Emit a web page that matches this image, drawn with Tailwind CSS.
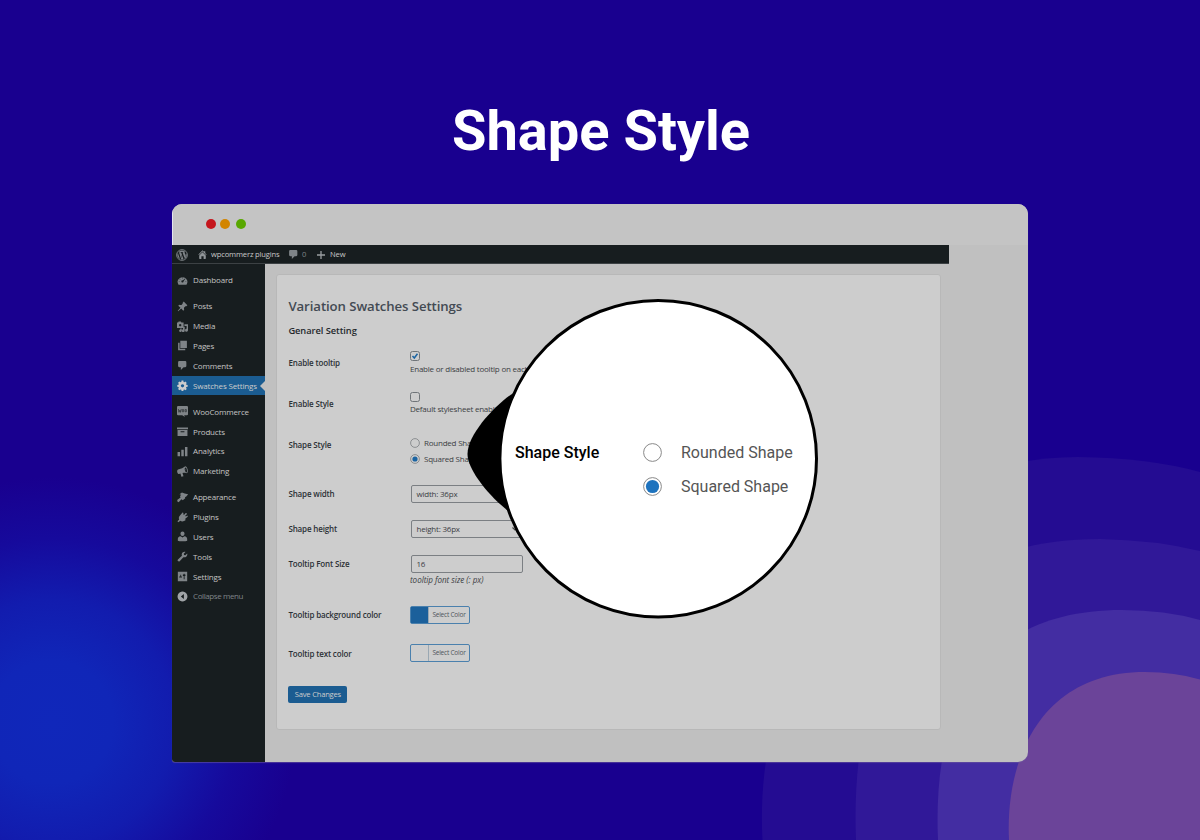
<!DOCTYPE html>
<html lang="en">
<head>
<meta charset="utf-8">
<title>Shape Style</title>
<script src="https://cdn.jsdelivr.net/npm/@tailwindcss/browser@4"></script>
</head>
<body class="relative w-[1200px] h-[840px] overflow-hidden bg-[#19008f] font-['Open_Sans','Noto_Sans',sans-serif]">
<!-- backdrop -->
<svg class="absolute inset-0" width="1200" height="840" viewBox="0 0 1200 840">
  <defs><radialGradient id="glow" gradientUnits="userSpaceOnUse" cx="52" cy="722" r="245">
    <stop offset="0" stop-color="#1027ba"/><stop offset=".25" stop-color="#1026b8"/><stop offset=".5" stop-color="#121cae"/><stop offset=".75" stop-color="#160a9c"/><stop offset="1" stop-color="#19008f"/>
  </radialGradient></defs>
  <rect width="420" height="440" y="400" fill="url(#glow)"/>
  <path fill="#240c92" d="M762.500 840C752 660 870 457 1078 457Q1150 458 1200 472V840Z"/>
  <path fill="#301898" d="M856 840C850 690 900 539 1100 539Q1155 540 1200 551V840Z"/>
  <path fill="#432da2" d="M938 840C932 700 985 610 1122 610Q1165 610 1200 620V840Z"/>
  <path fill="#6b4499" d="M1009 840C1005 760 1040 672 1145 672Q1175 672 1200 679.500V840Z"/>
</svg>

<svg class="hidden">
  <symbol id="wp" viewBox="0 0 20 20"><circle cx="10" cy="10" r="9" fill="none" stroke="currentColor" stroke-width="1.500"/><path fill="currentColor" d="M3.100 6.800 6.800 17A7.600 7.600 0 0 1 3.100 6.800ZM4 5.500A7.600 7.600 0 0 1 15.200 4.400C14 5 14.200 6.300 14.900 7.400c.9 1.500 1 2.500.3 4.600l-1 3L10.900 5.900l1-.1v-.7H7.500v.7l1.100.1 1.300 3.500-1.800 5.400L5 5.900l1-.1v-.7ZM10.200 10.700l2.300 6.400a7.600 7.600 0 0 1-4.500.1ZM16.700 6.500a7.600 7.600 0 0 1-2.800 10.100l2.300-6.700c.5-1.300.7-2.300.5-3.400Z"/></symbol>
  <symbol id="home" viewBox="0 0 20 20"><path fill="currentColor" d="m16 8.500 1.500 1.600-1.100 1L10 4.600l-6.400 6.500-1.100-1L10 2.400l2.500 2.600V4H15v3.500ZM10 6.100l6 5.900v5a1 1 0 0 1-1 1h-3v-5H8v5H5a1 1 0 0 1-1-1v-5Z"/></symbol>
  <symbol id="comment" viewBox="0 0 20 20"><path fill="currentColor" d="M4 2h11a2 2 0 0 1 2 2v7a2 2 0 0 1-2 2h-3l-5 5v-5H4a2 2 0 0 1-2-2V4a2 2 0 0 1 2-2Z"/></symbol>
  <symbol id="plus" viewBox="0 0 20 20"><path fill="currentColor" d="M18 8.700v2.600h-6.700V18H8.700v-6.700H2V8.700h6.700V2h2.600v6.700Z"/></symbol>
  <symbol id="dash" viewBox="0 0 20 20"><path fill="currentColor" fill-rule="evenodd" d="M2.760 17.500h14.480A9 8.500 0 1 0 1 11.500c0 2 .64 4.500 1.760 6ZM10 4.700a.8.800 0 1 0 0 1.600.8.800 0 0 0 0-1.600ZM5.500 6.700a.8.800 0 1 0 0 1.600.8.800 0 0 0 0-1.600Zm9-.2-4 3.300a2 2 0 1 0 1.400 1.600l3-4.200ZM3.800 10.700a.8.800 0 1 0 0 1.600.8.800 0 0 0 0-1.600Zm12.400 0a.8.800 0 1 0 0 1.600.8.800 0 0 0 0-1.600Z"/></symbol>
  <symbol id="pin" viewBox="0 0 20 20"><path fill="currentColor" d="m10.400 3 1.900-1.900c1.800 2.300 3.900 4.500 6.600 6.600L17 9.600c-1.300-.4-2-.1-4.100 2.200-.6 1.400-.1 2.800.2 4.100l-1.700 1.700-3.700-4-5.600 4.900-.7-.7L6.300 12.300l-4-3.700L4 6.900c1.500.4 2.700.8 4.100.2C10.200 5.200 10.600 4.500 10.400 3Z"/></symbol>
  <symbol id="media" viewBox="0 0 20 20"><path fill="currentColor" fill-rule="evenodd" d="M0 2.500h2L3 1h4l1 1.500h4V12.500H0ZM5.800 5.300a2.100 2.100 0 1 0 .01 0Z"/><path fill="currentColor" d="M13.500 6H20v11a2.700 2.700 0 1 1-2.500-2.700V9h-4ZM11 10.500h3v7a2.700 2.700 0 1 1-3-2.600ZM6 13.500h2.500v4A2.300 2.300 0 1 1 6 15.300Z"/></symbol>
  <symbol id="pages" viewBox="0 0 20 20"><path fill="currentColor" d="M6 1.500h12v13H6ZM2 5h2.800v10.700H15V18.500H2Z"/></symbol>
  <symbol id="gear" viewBox="0 0 20 20"><path fill="currentColor" fill-rule="evenodd" d="m8.300 1-.5 2.600-1.400.6-2-1.300L2 5.200l1.300 2-.6 1.600-2.200.5v3l2.200.5.6 1.400-1.300 2 2.400 2.300 2-1.300 1.400.6.5 2.100h3.200l.5-2.100 1.400-.6 2 1.300 2.300-2.300-1.300-2 .6-1.400 2.400-.5v-3L17 8.700l-.6-1.400 1.300-2-2.300-2.400-2 1.300-1.400-.6-.5-2.600ZM10 7.500a3 3 0 1 1-.01 0Z"/></symbol>
  <symbol id="woo" viewBox="0 0 20 20"><path fill="currentColor" d="M2 0h16a2 2 0 0 1 2 2v13a2 2 0 0 1-2 2h-5l1.500 3L9.500 17H2a2 2 0 0 1-2-2V2a2 2 0 0 1 2-2Z"/><path d="m2.500 5.500 1 6 1.800-4 1 4 1.500-6M9.700 6.500h2.300v4H9.700ZM14.700 6.500h2.300v4h-2.300Z" fill="none" stroke="#2a3033" stroke-width="1.300"/></symbol>
  <symbol id="box" viewBox="0 0 20 20"><path fill="currentColor" fill-rule="evenodd" d="M0 2.500h20V6H0ZM1 7.200h18V18H1ZM6.500 9.500v2h7v-2Z"/></symbol>
  <symbol id="bars" viewBox="0 0 20 20"><path fill="currentColor" d="M1 11h4.500v7.500H1ZM7.800 7h4.500v11.500H7.800ZM14.500 2H19v16.500h-4.500Z"/></symbol>
  <symbol id="horn" viewBox="0 0 20 20"><path fill="currentColor" fill-rule="evenodd" d="M19.200 5.900c.9 3.300.3 6.500-1.400 7-1 .3-2.600-.4-5.800-.6l-2 .5 1.800 5.800-3.800.9L6.200 13.700l-2.400.8C1.900 14.500 1 12.800.5 11.200S.100 7.500 1.800 6.500l7.600-2.300C11.400 3 13.400 1 14.600.7c1.600-.4 3.700 1.900 4.600 5.200Zm-4-3c-1.200.4-1.500 2.500-.9 5s2 4 3 3.700 1.400-2.500.7-4.900c-.6-2.300-1.800-4-2.800-3.800Zm.5 2.600c.8 0 1.300 2.500.3 2.900Z"/></symbol>
  <symbol id="brush" viewBox="0 0 20 20"><path fill="currentColor" d="M4.500 4 9 1l5 1.500 6.500 1.700-4.500 5-1.500-.7.5 3-4.500 3.500-2.500-1.800L3 18.500.3 17l.5-3 5.700-4-1-2.500L7.500 5Z"/></symbol>
  <symbol id="plug" viewBox="0 0 20 20"><path fill="currentColor" d="M13.100 4.900 15.900 2c.7-.6 2.600 1 1.900 1.900l-2.900 2.900 1.100 1.200 2.300-1.400c.9-.4 1.900 1.500 1 2.200L15 12.200l.5 2.800c-3 2.500-7 2.700-9.500 1L2.500 18.700.8 17 4 13.500c-1.500-2.500-.3-5.300 1.800-7.500L9.700 1.200c.6-.8 2.700.3 2 1.300l-.7 1.700Z"/></symbol>
  <symbol id="user" viewBox="0 0 20 20"><path fill="currentColor" d="M10 9.200C7 9.200 6.300 6.500 6.300 4.700a3.700 3.700 0 0 1 7.400 0c0 1.800-.7 4.500-3.700 4.500ZM6.500 9.500 10 12l3.500-2.500c3.500.5 5 2.500 5 5V17.500c-2 1.500-15 1.500-17 0v-3c0-2.500 1.500-4.500 5-5Z"/></symbol>
  <symbol id="wrench" viewBox="0 0 20 20"><path fill="currentColor" d="M17.200 9.800c-1.600 1.700-3.800 2.100-5.600 1.500l-6.800 7.200c-1 .9-2.700 0-3.200-.5s-.9-1.700.1-2.700L9 8.600c-.8-1.900-.4-4.300 1.100-5.800 1.400-1.400 3.500-1.800 5.300-1.200l-3 3.500.5 2.200 2.200.5 3.400-3.300c.7 1.800.2 3.900-1.300 5.300Z"/></symbol>
  <symbol id="sett" viewBox="0 0 20 20"><path fill="currentColor" d="M1.500 1.500h17v17h-17Z"/><path fill="#171d1f" d="M12.200 5h1.600v10h-1.600ZM10.700 6.500h4.600V9h-4.600ZM4 12h5v-2H7.500V7H6v3H4Z"/></symbol>
  <symbol id="coll" viewBox="0 0 20 20"><path fill="currentColor" fill-rule="evenodd" d="M10 1a9 9 0 1 1-.01 0ZM12.500 5.500 7 10l5.500 4.500Z"/></symbol>
</svg>

<div class="relative flex flex-col h-full">
  <h1 class="pt-[98px] h-[204px] text-center font-['Roboto',sans-serif] font-bold text-[56px] leading-[66px] text-white pl-[2px]">Shape Style</h1>

  <main class="ml-[172px] w-[856px] h-[558px] rounded-[10px] rounded-bl-[3px] overflow-hidden bg-[#c0c0c0] shadow-[0_1px_1px_rgba(110,90,160,0.6)] flex flex-col">
    <div class="h-[41px] shrink-0 bg-[#c4c4c4] border-l border-[#e4e4f0] flex items-center pl-[33px] pb-[2px]">
      <i class="size-[10px] rounded-full bg-[#c5161d] mr-[4px]"></i><i class="size-[10px] rounded-full bg-[#d28500] mr-[6px]"></i><i class="size-[10px] rounded-full bg-[#58a700]"></i>
    </div>
    <div class="h-[19px] shrink-0 w-[777px] bg-[#171d1f] border-b border-[#3c4144] flex items-center text-[7.600px] leading-[11px] tracking-[-0.160px] text-[#c8c8c8] whitespace-nowrap pl-[4px] pt-[1px]">
      <svg class="size-[12px] text-[#7f8488]"><use href="#wp"/></svg>
      <svg class="size-[11px] text-[#8f9497] ml-[9px]"><use href="#home"/></svg>
      <span class="ml-[3px] w-[77px]">wpcommerz plugins</span>
      <svg class="size-[11px] text-[#7f8488]"><use href="#comment"/></svg>
      <span class="ml-[3px] w-[14px] text-[#7f8488]">0</span>
      <svg class="size-[10px] text-[#9a9ea1]"><use href="#plus"/></svg>
      <span class="ml-[4px]">New</span>
    </div>
    <div class="flex flex-1 min-h-0">
      <nav class="w-[93px] shrink-0 bg-[#171d1f] pt-[6.300px] text-[8px] tracking-[-0.170px] text-[#c4c4c4] whitespace-nowrap [&>div]:h-[19.800px] [&>div]:flex [&>div]:items-center [&>div]:gap-[5px] [&>div]:pl-[5px] [&_svg]:size-[11px] [&_svg]:text-[#7f8488]">
        <div><svg><use href="#dash"/></svg>Dashboard</div>
        <div class="mt-[6.400px]"><svg><use href="#pin"/></svg>Posts</div>
        <div><svg><use href="#media"/></svg>Media</div>
        <div><svg><use href="#pages"/></svg>Pages</div>
        <div><svg><use href="#comment"/></svg>Comments</div>
        <div class="relative bg-[#1b5c91] [&_svg]:text-[#cccccc]! text-[#cccccc]"><svg><use href="#gear"/></svg>Swatches Settings<i class="absolute right-0 top-[5px] border-y-[5px] border-y-transparent border-r-[5px] border-r-[#c0c0c0]"></i></div>
        <div class="mt-[6.400px]"><svg><use href="#woo"/></svg>WooCommerce</div>
        <div><svg><use href="#box"/></svg>Products</div>
        <div><svg><use href="#bars"/></svg>Analytics</div>
        <div><svg><use href="#horn"/></svg>Marketing</div>
        <div class="mt-[6.400px]"><svg><use href="#brush"/></svg>Appearance</div>
        <div><svg><use href="#plug"/></svg>Plugins</div>
        <div><svg><use href="#user"/></svg>Users</div>
        <div><svg><use href="#wrench"/></svg>Tools</div>
        <div><svg><use href="#sett"/></svg>Settings</div>
        <div class="text-[#7f8488] tracking-[-0.400px]"><svg class="text-[#a0a4a7]!"><use href="#coll"/></svg>Collapse menu</div>
      </nav>
      <section class="ml-[11px] mt-[10px] w-[665px] h-[456px] rounded-[3px] border border-[#b8b8b8] bg-[#cdcdcd] pl-[11.400px] text-[8px] tracking-[-0.220px] leading-[10px] text-[#3c4043] whitespace-nowrap">
        <h2 class="pt-[22px] text-[13.200px] leading-[18px] font-semibold tracking-[-0.080px] text-[#434a53] h-[41px]">Variation Swatches Settings</h2>
        <h3 class="pt-[10px] h-[34px] text-[9.300px] leading-[10px] font-semibold tracking-[-0.060px] text-[#24282c]">Genarel Setting</h3>
        <div class="[&>div]:flex [&>div>b]:w-[121.600px] [&>div>b]:shrink-0 [&>div>b]:font-semibold [&>div>b]:text-[#2c3136] [&>div>b]:pt-[5.500px] [&>div>b]:tracking-[-0.150px]">
          <div class="h-[41px]"><b class="pt-[8px]!">Enable tooltip</b><div class="pt-[1px]"><svg class="size-[10px]" viewBox="0 0 10 10"><rect x=".5" y=".5" width="9" height="9" rx="2" fill="none" stroke="#6f7478"/><path d="M2.500 5 4.300 7 7.500 2.800" fill="none" stroke="#1b64a2" stroke-width="1.500"/></svg><p class="pt-[2.500px]">Enable or disabled tooltip on each variation</p></div></div>
          <div class="h-[41px]"><b class="pt-[8px]!">Enable Style</b><div class="pt-[1px]"><svg class="size-[10px]" viewBox="0 0 10 10"><rect x=".5" y=".5" width="9" height="9" rx="2" fill="none" stroke="#6f7478"/></svg><p class="pt-[2px]">Default stylesheet enable</p></div></div>
          <div class="h-[51.500px]"><b class="pt-[7.500px]!">Shape Style</b><div class="pt-[5.500px] flex flex-col gap-[6.500px]"><span class="flex items-center gap-[4px]"><svg class="size-[10px]" viewBox="0 0 10 10"><circle cx="5" cy="5" r="4.400" fill="none" stroke="#7b7f83" stroke-width=".8"/></svg>Rounded Shape</span><span class="flex items-center gap-[4px]"><svg class="size-[10px]" viewBox="0 0 10 10"><circle cx="5" cy="5" r="4.400" fill="none" stroke="#7b7f83" stroke-width=".8"/><circle cx="5" cy="5" r="2.600" fill="#1b64a2"/></svg>Squared Shape</span></div></div>
          <div class="h-[35px]"><b>Shape width</b><div class="mt-[1px] ml-[1px] h-[18px] w-[112px] rounded-[2px] border border-[#7b7f83] pl-[4.500px] pt-[3px]">width: 36px</div></div>
          <div class="h-[35px]"><b>Shape height</b><div class="mt-[1px] ml-[1px] h-[18px] w-[112px] rounded-[2px] border border-[#7b7f83] pl-[4.500px] pt-[3px] pr-[4px] flex justify-between">height: 36px<svg class="size-[6px] mt-[2px]" viewBox="0 0 6 6"><path d="m.5 1.500 2.500 2.500 2.500-2.500" fill="none" stroke="#444" stroke-width="1.200"/></svg></div></div>
          <div class="h-[51px]"><b>Tooltip Font Size</b><div><div class="mt-[1px] ml-[1px] h-[18px] w-[112px] rounded-[2px] border border-[#7b7f83] pl-[4.500px] pt-[3px]">16</div><p class="italic pt-[2.500px] text-[8.100px] tracking-[-0.040px]">tooltip font size (: px)</p></div></div>
          <div class="h-[38px]"><b>Tooltip background color</b><div class="mt-[1px] h-[18px] w-[60px] rounded-[2px] border border-[#4a80ad] flex"><i class="w-[17px] bg-[#1b609b]"></i><span class="flex-1 border-l border-[#9aa8b3] text-[6.500px] text-[#50565b] leading-[16px] text-center">Select Color</span></div></div>
          <div class="h-[43.500px]"><b class="pt-[6px]!">Tooltip text color</b><div class="mt-[1px] h-[18px] w-[60px] rounded-[2px] border border-[#4a80ad] flex"><i class="w-[17px]"></i><span class="flex-1 border-l border-[#9aa8b3] text-[6.500px] text-[#50565b] leading-[16px] text-center">Select Color</span></div></div>
        </div>
        <button class="block w-[59px] h-[17px] rounded-[2px] bg-[#1b5c91] text-[#cccccc] text-[7.600px] leading-[17px]">Save Changes</button>
      </section>
    </div>
  </main>
</div>

<!-- magnifier lens over the settings page -->
<svg class="absolute left-0 top-0" width="1200" height="840" viewBox="0 0 1200 840">
  <path d="M515 392C497 403 467.500 434 467.500 454C467.500 468 485 493 510 512.500L530 455Z"/>
  <circle cx="658.200" cy="458.700" r="158.300" fill="#fff" stroke="#000" stroke-width="3"/>
</svg>
<div class="absolute left-[515px] top-[443px] flex font-['Roboto',sans-serif] text-[16px] leading-[20px] whitespace-nowrap">
  <div class="w-[128px] font-medium text-black">Shape Style</div>
  <div class="flex flex-col gap-[14px] text-[#555555]">
    <div class="flex items-center gap-[19px]"><svg class="size-[19px] -mt-[2px]" viewBox="0 0 19 19"><circle cx="9.500" cy="9.500" r="8.900" fill="#fff" stroke="#888" stroke-width="1"/></svg>Rounded Shape</div>
    <div class="flex items-center gap-[19px]"><svg class="size-[19px] -mt-[2px]" viewBox="0 0 19 19"><circle cx="9.500" cy="9.500" r="8.900" fill="#fff" stroke="#888" stroke-width="1"/><circle cx="9.500" cy="9.500" r="6.600" fill="#1e73be"/></svg>Squared Shape</div>
  </div>
</div>
</body>
</html>
